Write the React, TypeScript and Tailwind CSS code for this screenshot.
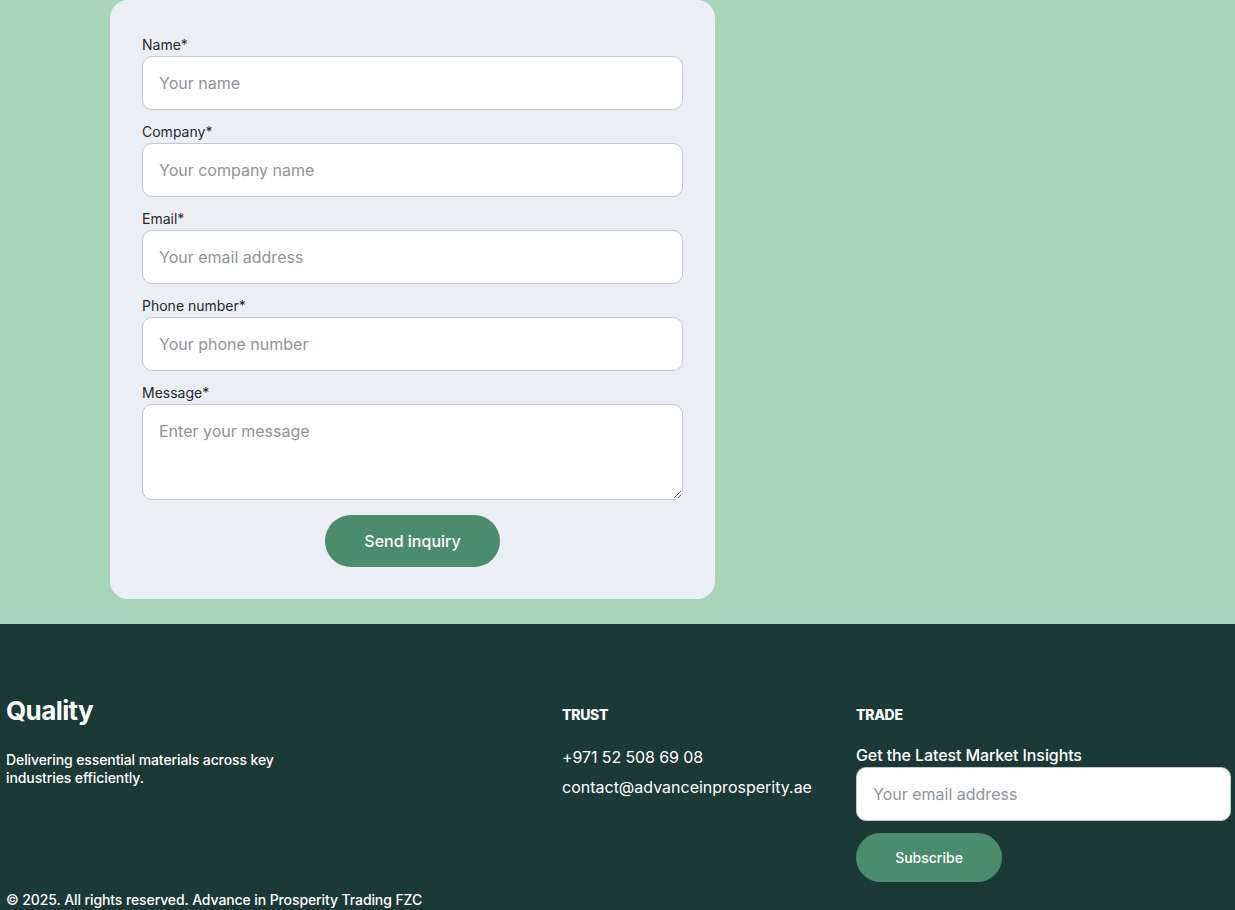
import React from "react";

const font = { fontFamily: "Inter, 'Noto Sans', sans-serif" };

function Field({ label, placeholder }: { label: string; placeholder: string }) {
  return (
    <div className="mb-3">
      <label className="block text-sm leading-5 text-[#26292e] mb-px">{label}</label>
      <input
        placeholder={placeholder}
        className="w-full h-[54px] rounded-[10px] border border-[#c3c7ce] bg-white px-4 text-base text-[#222] placeholder:text-[#8f9399] outline-none"
      />
    </div>
  );
}

export default function App() {
  return (
    <div style={font} className="w-[1235px] min-h-[910px]">
      {/* Contact form */}
      <section className="bg-[#a8d5b9] pl-[110px] pb-[25px]">
        <form className="w-[605px] rounded-[18px] bg-[#ebeff3] px-8 pt-[35px] pb-8">
          <Field label="Name*" placeholder="Your name" />
          <Field label="Company*" placeholder="Your company name" />
          <Field label="Email*" placeholder="Your email address" />
          <Field label="Phone number*" placeholder="Your phone number" />
          <div>
            <label className="block text-sm leading-5 text-[#26292e] mb-px">Message*</label>
            <textarea
              placeholder="Enter your message"
              className="block w-full h-[96px] rounded-[10px] border border-[#c3c7ce] bg-white px-4 py-[14px] text-base text-[#222] placeholder:text-[#8f9399] outline-none"
            />
          </div>
          <div className="flex justify-center mt-[15px]">
            <button
              type="button"
              className="h-[52px] w-[175px] rounded-full bg-[#4b8b6e] text-base font-medium text-white"
            >
              Send inquiry
            </button>
          </div>
        </form>
      </section>

      {/* Footer */}
      <footer className="bg-[#1c3a35] text-white pl-[6px] pr-[4px] pt-[81px] pb-[3px]">
        <div className="flex">
          <div className="w-[556px]">
            <div className="text-[26px] font-bold leading-8 tracking-[-0.6px] -mt-[10px]">Quality</div>
            <p className="mt-[24px] w-[290px] text-sm font-medium leading-[18px] tracking-[-0.1px]">
              Delivering essential materials across key industries efficiently.
            </p>
          </div>
          <div className="w-[294px]">
            <div className="text-sm font-extrabold leading-5 tracking-[-0.3px]">TRUST</div>
            <div className="mt-5 text-base leading-6 tracking-[-0.1px]">+971 52 508 69 08</div>
            <div className="mt-[6px] text-base leading-6">contact@advanceinprosperity.ae</div>
          </div>
          <div className="flex-1">
            <div className="text-sm font-extrabold leading-5 tracking-[-0.3px]">TRADE</div>
            <div className="mt-5 text-base font-medium leading-5 tracking-[-0.1px]">Get the Latest Market Insights</div>
            <input
              placeholder="Your email address"
              className="mt-[2px] w-full h-[54px] rounded-[10px] border border-[#c3c7ce] bg-white px-4 text-base text-[#222] placeholder:text-[#8f9399] outline-none"
            />
            <button
              type="button"
              className="mt-3 h-[49px] w-[146px] rounded-full bg-[#4b8b6e] text-sm font-medium text-white"
            >
              Subscribe
            </button>
          </div>
        </div>
        <div className="mt-[8px] text-sm font-medium leading-5 tracking-[-0.1px]">
          © 2025. All rights reserved. Advance in Prosperity Trading FZC
        </div>
      </footer>
    </div>
  );
}
